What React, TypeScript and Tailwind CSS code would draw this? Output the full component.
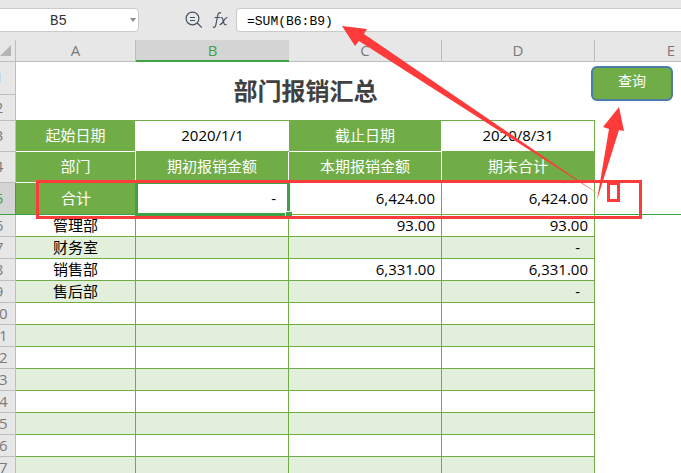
import clsx from "clsx";

const COLUMNS = ["A", "B", "C", "D"];

const ENTRIES = [
    { row: 6, name: "管理部", current: "93.00", total: "93.00" },
    { row: 7, name: "财务室", current: "", total: "-" },
    { row: 8, name: "销售部", current: "6,331.00", total: "6,331.00" },
    { row: 9, name: "售后部", current: "", total: "-" },
    ...[10, 11, 12, 13, 14, 15, 16, 17].map((row) => ({ row, name: "", current: "", total: "" })),
];

const cell = "p-0 pb-0.5 border-r border-b border-[#70ad47]";
const label = "p-0 pb-0.5 border-r border-b border-white bg-[#70ad47] text-white text-center";

function FormulaBar() {
    return (
        <div className="flex h-10 items-center bg-[#e7e7e7]">
            <div className="-ml-5 flex h-6 w-[159px] shrink-0 items-center rounded-sm border border-[#cacaca] bg-white">
                <input
                    aria-label="Name box"
                    defaultValue="B5"
                    className="min-w-0 flex-1 pt-0.5 pr-3 pl-5 text-center font-['Liberation_Mono',monospace] text-[14px] text-[#333] outline-none"
                />
                <button aria-label="Open name list" className="px-0.5">
                    <svg width="6" height="4" viewBox="0 0 6 4" fill="#8c8c8c">
                        <path d="M0 0h6L3 4z" />
                    </svg>
                </button>
            </div>
            <button aria-label="Evaluate formula" className="ml-[45px]">
                <svg width="20" height="20" viewBox="0 0 20 20" fill="none" stroke="#465064" strokeWidth="1.2">
                    <circle cx="8.5" cy="8.5" r="6.4" />
                    <path d="M6 7.5h5M6 10.5h5M13.2 13l4.6 4.6" />
                </svg>
            </button>
            <button aria-label="Insert function" className="ml-1.5 flex w-5 justify-center">
                <svg width="17" height="18" viewBox="0 0 17 18" fill="none" stroke="#465064" strokeWidth="1.2">
                    <path d="M9 2.2C7.200 1 6.200 2 5.800 4L3.800 14c-.4 2-1.300 2.700-2.800 2.100M2.500 6.500h5.500" />
                    <path d="M8.500 6.800c1.500-.8 2 .2 2.500 2l.8 3c.4 1.700 1.300 2.500 2.700 1.500M15.500 6.500c-1.600-.3-2.600 1.300-3.900 3.400-1.300 2.200-2.300 4-4 3.600" />
                </svg>
            </button>
            <input
                aria-label="Formula"
                defaultValue="=SUM(B6:B9)"
                className="ml-1.5 h-6 min-w-0 flex-1 rounded-l-sm border border-r-0 border-[#cacaca] bg-white pt-0.5 pl-2.5 font-['Liberation_Mono',monospace] text-[13px] text-black outline-none"
            />
        </div>
    );
}

function RowHead({ n, active }: { n: number; active?: boolean }) {
    return (
        <th
            scope="row"
            className={clsx(
                "border-r border-b p-0 pb-0.5 text-center font-normal",
                active ? "border-[#3fa345] bg-[#d4d4d4] text-[#3fa345]" : "border-[#bdbdbd] bg-[#e7e7e7] text-[#7a7a7a]"
            )}
        >
            {n}
        </th>
    );
}

function Sheet() {
    return (
        <table className="-ml-[17px] w-[calc(100%+17px)] min-w-[764px] table-fixed border-separate border-spacing-0 text-[15px] leading-[18px] text-black">
            <colgroup>
                <col className="w-[33px]" />
                <col className="w-[120px]" />
                <col className="w-[153px]" />
                <col className="w-[153px]" />
                <col className="w-[153px]" />
                <col />
            </colgroup>
            <thead>
                <tr className="h-[22px] bg-[#e7e7e7] text-[#7a7a7a]">
                    <th className="border-r border-b border-[#bdbdbd] p-0">
                        <svg width="11" height="11" viewBox="0 0 11 11" fill="#b5b5b5" className="mr-1 ml-auto">
                            <path d="M11 0v11H0z" />
                        </svg>
                    </th>
                    {COLUMNS.map((name) => (
                        <th
                            key={name}
                            scope="col"
                            className={clsx(
                                "p-0 font-normal",
                                name === "B"
                                    ? "border-b-2 border-[#3fa345] bg-[#d4d4d4] text-[#3fa345]"
                                    : "border-r border-b border-[#bdbdbd] pb-0.5"
                            )}
                        >
                            {name}
                        </th>
                    ))}
                    <th scope="col" className="border-b border-[#bdbdbd] p-0 pb-0.5 font-normal">E</th>
                </tr>
            </thead>
            <tbody>
                <tr className="h-[33px]">
                    <RowHead n={1} />
                    <td colSpan={4} rowSpan={2} className="border-b border-[#70ad47] p-0 text-center text-2xl font-bold text-[#404040]">
                        部门报销汇总
                    </td>
                    <td rowSpan={2} className="p-0 align-top">
                        <button className="relative -left-1 mt-1 flex h-[35px] w-[82px] justify-center rounded-md border-2 border-[#4a7ca8] bg-[#70ad47] pt-1 text-[14px] text-white">
                            查询
                        </button>
                    </td>
                </tr>
                <tr className="h-[26px]">
                    <RowHead n={2} />
                </tr>
                <tr className="h-[31px] text-center">
                    <RowHead n={3} />
                    <td className={label}>起始日期</td>
                    <td className="border-b border-[#70ad47] p-0 pb-0.5">2020/1/1</td>
                    <td className={label}>截止日期</td>
                    <td className={cell}>2020/8/31</td>
                    <td />
                </tr>
                <tr className="h-[31px]">
                    <RowHead n={4} />
                    <td className={label}>部门</td>
                    <td className={label}>期初报销金额</td>
                    <td className={label}>本期报销金额</td>
                    <td className={clsx(cell, "bg-[#70ad47] text-center text-white")}>期末合计</td>
                    <td />
                </tr>
                <tr className="h-8 text-right">
                    <RowHead n={5} active />
                    <td className="border-b border-[#3fa345] bg-[#70ad47] p-0 pb-0.5 text-center text-white">合计</td>
                    <td className={clsx(cell, "relative pr-3")}>
                        -
                        <span className="absolute -top-0.5 -right-0.5 -bottom-0.5 -left-px border-[3px] border-[#3fa345]" />
                        <span className="absolute -right-1 -bottom-1 size-[7px] border-t border-l border-white bg-[#3fa345]" />
                    </td>
                    <td className={clsx(cell, "pr-1.5")}>6,424.00</td>
                    <td className={clsx(cell, "pr-1.5")}>6,424.00</td>
                    <td className="border-b border-[#3fa345]" />
                </tr>
                {ENTRIES.map((entry) => (
                    <tr key={entry.row} className={clsx("h-[22px] text-right", entry.row % 2 === 1 && "[&>td:not(:last-child)]:bg-[#e2efda]")}>
                        <RowHead n={entry.row} />
                        <td className={clsx(cell, "text-center")}>{entry.name}</td>
                        <td className={cell} />
                        <td className={clsx(cell, "pr-1.5")}>{entry.current}</td>
                        <td className={clsx(cell, entry.total === "-" ? "pr-3.5" : "pr-1.5")}>{entry.total}</td>
                        <td className="p-0" />
                    </tr>
                ))}
            </tbody>
        </table>
    );
}

function Annotations() {
    return (
        <svg width="681" height="473" viewBox="0 0 681 473" className="pointer-events-none absolute top-0 left-0">
            <g fill="none" stroke="#fd3b3b" strokeWidth="3">
                <path d="M37.5 181.5h603v36h-603z" />
                <path d="M608.5 183.5h10v17h-10z" />
            </g>
            <g fill="#fd3b3b">
                <path d="M342 26l25 3-3 5 238 162.500L359 41l-4 5z" />
                <path d="M619 107l-16 20 6 2-12 71 22-70 5 1z" />
            </g>
        </svg>
    );
}

export default function App() {
    return (
        <main className="relative h-screen overflow-hidden bg-white font-['Open_Sans','Noto_Sans_CJK_SC',sans-serif]">
            <FormulaBar />
            <Sheet />
            <Annotations />
        </main>
    );
}
